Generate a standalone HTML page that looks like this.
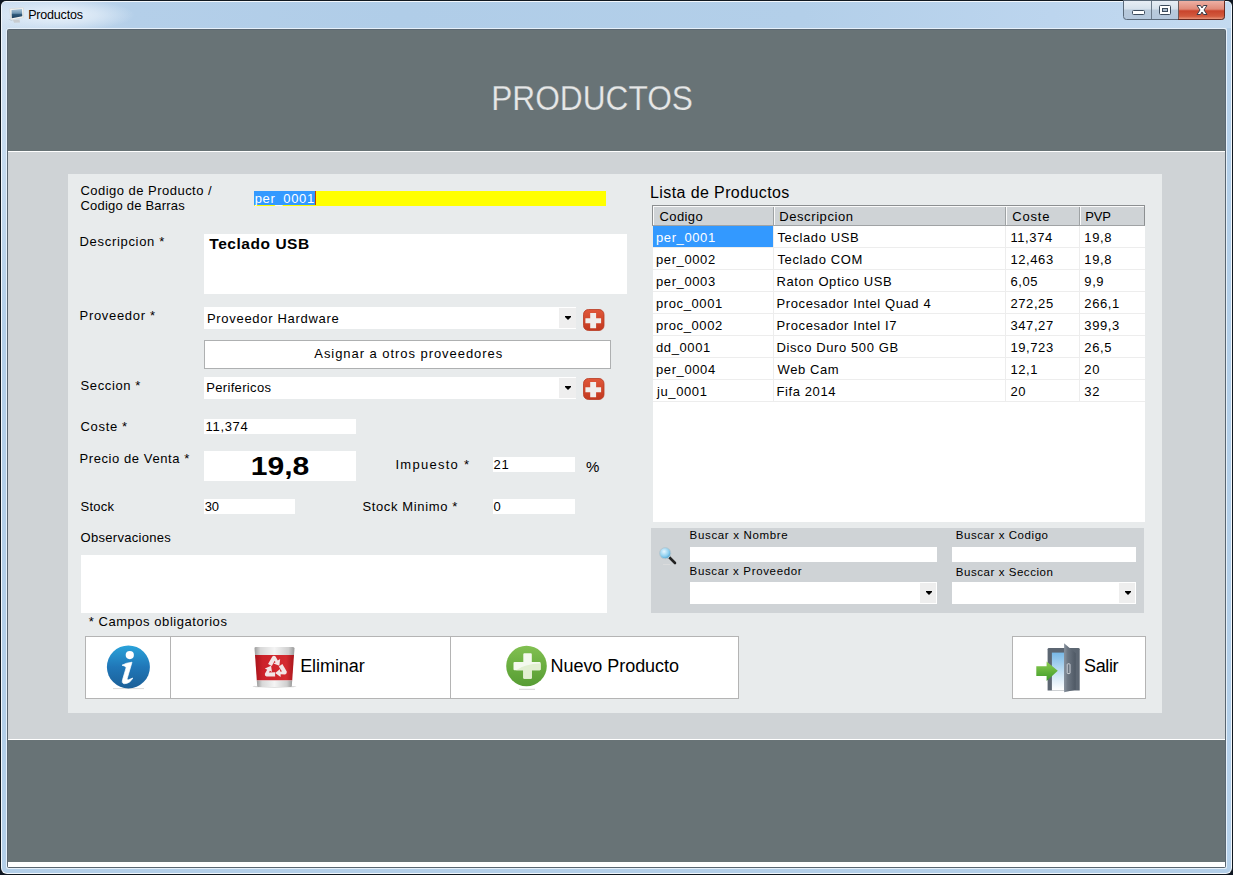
<!DOCTYPE html>
<html><head><meta charset="utf-8"><style>
html,body{margin:0;padding:0;width:1233px;height:875px;overflow:hidden;background:#0e1622;}
body{position:relative;font-family:"Liberation Sans", sans-serif;}
#win{position:absolute;left:0;top:0;width:1233px;height:875px;}
</style></head><body>
<div id="win">
<div style="position:absolute;left:0px;top:0px;width:1233px;height:875px;background:#101820;border-radius:6px 6px 7px 7px"></div>
<div style="position:absolute;left:1px;top:1px;width:1231px;height:873px;background:#f2f7fc;border-radius:5px 5px 6px 6px"></div>
<div style="position:absolute;left:2px;top:2px;width:1229px;height:871px;border-radius:4px 4px 5px 5px;background:#b3cfe9"></div>
<div style="position:absolute;left:2px;top:2px;width:1229px;height:26px;border-radius:4px 4px 0 0;background:linear-gradient(90deg,#d0e1f2 0px,#c2d8ee 60px,#b4cfe9 130px,#b0cde8 400px,#b3cfe9 800px,#bcd5ee 1050px,#c4daf0 1233px)"></div>
<div style="position:absolute;left:2px;top:2px;width:150px;height:26px;background:radial-gradient(ellipse 75px 16px at 58px 13px,rgba(236,244,251,0.95) 0%,rgba(226,237,248,0.7) 50%,rgba(200,220,240,0) 100%)"></div>
<div style="position:absolute;left:2px;top:28px;width:4px;height:300px;background:linear-gradient(180deg,#d0e1f2 0px,#c6dbef 120px,#b3cfe9 300px)"></div>
<div style="position:absolute;left:6px;top:28px;width:1221px;height:841px;background:#e6f0fa;border-radius:2px"></div>
<div style="position:absolute;left:7px;top:29px;width:1219px;height:839px;background:#5a6670;border-radius:2px"></div>
<div style="position:absolute;left:8px;top:30px;width:1217px;height:121px;background:#687376"></div>
<div style="position:absolute;left:8px;top:151px;width:1217px;height:1px;background:#ffffff"></div>
<div style="position:absolute;left:8px;top:152px;width:1217px;height:587px;background:#cfd3d6"></div>
<div style="position:absolute;left:8px;top:739px;width:1217px;height:1px;background:#ffffff"></div>
<div style="position:absolute;left:8px;top:740px;width:1217px;height:122px;background:#687376"></div>
<div style="position:absolute;left:8px;top:862px;width:1217px;height:5px;background:#ffffff"></div>
<div style="position:absolute;left:68px;top:174px;width:1094px;height:539px;background:#e8ebec"></div>
<svg style="position:absolute;left:7px;top:6px" width="18" height="18" viewBox="0 0 18 18">
<defs><linearGradient id="scr" x1="0" y1="0" x2="0" y2="1"><stop offset="0" stop-color="#a9c4d8"/><stop offset="0.45" stop-color="#6f94b0"/><stop offset="0.6" stop-color="#2f5878"/><stop offset="1" stop-color="#1d3f5c"/></linearGradient></defs>
<path d="M1.2 13 L4 14.5 L6 14.5 Z" fill="#9aa6b0" opacity="0.7"/>
<path d="M6 14 L12.5 13.6 L13 16.4 L7 16.8 Z" fill="#c8ccd0"/>
<path d="M2.7 2.8 L16.4 1.8 L16.6 11.5 L4 14 Z" fill="#f6f6f4" stroke="#cfd0cc" stroke-width="0.5"/>
<path d="M4.5 4.1 L15 3.1 L15.3 10.2 L4.8 12.2 Z" fill="url(#scr)"/>
</svg>
<svg style="position:absolute;left:1122px;top:0px" width="105" height="22" viewBox="0 0 105 22">
<defs>
<linearGradient id="gb" x1="0" y1="0" x2="0" y2="1"><stop offset="0" stop-color="#e9eff6"/><stop offset="0.45" stop-color="#d6e1ec"/><stop offset="0.5" stop-color="#b9cadb"/><stop offset="1" stop-color="#b4c7dc"/></linearGradient>
<linearGradient id="gr" x1="0" y1="0" x2="0" y2="1"><stop offset="0" stop-color="#eeb0a4"/><stop offset="0.45" stop-color="#e08a78"/><stop offset="0.55" stop-color="#c9442c"/><stop offset="0.85" stop-color="#d25a3e"/><stop offset="1" stop-color="#e8947a"/></linearGradient>
</defs>
<path d="M1.5 0.5 H102.5 V16.5 Q102.5 19.5 99.5 19.5 H4.5 Q1.5 19.5 1.5 16.5 Z" fill="url(#gb)" stroke="#5b6a7a" stroke-width="1"/>
<path d="M56.5 1 H102 V16.5 Q102 19 99.5 19 H56.5 Z" fill="url(#gr)"/>
<path d="M102.5 0.5 V16.5 Q102.5 19.5 99.5 19.5 H56" fill="none" stroke="#6a2a20" stroke-width="1"/>
<line x1="29.5" y1="1" x2="29.5" y2="19" stroke="#6b7a8a" stroke-width="1"/>
<line x1="56.5" y1="1" x2="56.5" y2="19" stroke="#6b5a5a" stroke-width="1"/>
<rect x="10.5" y="10.5" width="12" height="4" rx="1" fill="#fff" stroke="#3c4b5c" stroke-width="1"/>
<rect x="37.5" y="5.5" width="11" height="9" rx="1" fill="#fff" stroke="#3c4b5c" stroke-width="1"/>
<rect x="40.5" y="8.5" width="5" height="3" fill="#aabbcc" stroke="#3c4b5c" stroke-width="1"/>
<path d="M75 5.5 L78.5 5.5 L80 8 L81.5 5.5 L85 5.5 L82 10 L85 14.5 L81.5 14.5 L80 12 L78.5 14.5 L75 14.5 L78 10 Z" fill="#fff" stroke="#3c3c48" stroke-width="1" stroke-linejoin="round"/>
</svg>
<div style="position:absolute;left:254px;top:191px;width:352px;height:15px;background:#ffff00"></div>
<div style="position:absolute;left:254px;top:191px;width:61px;height:14px;background:#3399ff"></div>
<div style="position:absolute;left:315px;top:191px;width:1px;height:14px;background:#c04000"></div>
<div style="position:absolute;left:204px;top:234px;width:423px;height:60px;background:#fff"></div>
<div style="position:absolute;left:204px;top:307px;width:372px;height:22px;background:#fff"></div>
<div style="position:absolute;left:559px;top:308px;width:17px;height:20px;background:#eeeeee"></div>
<div style="position:absolute;left:204px;top:340px;width:407px;height:29px;background:#fff;box-sizing:border-box;border:1px solid #aeb0b1"></div>
<div style="position:absolute;left:204px;top:377px;width:372px;height:22px;background:#fff"></div>
<div style="position:absolute;left:559px;top:378px;width:17px;height:20px;background:#eeeeee"></div>
<div style="position:absolute;left:204px;top:419px;width:152px;height:15px;background:#fff"></div>
<div style="position:absolute;left:204px;top:451px;width:152px;height:30px;background:#fff"></div>
<div style="position:absolute;left:493px;top:457px;width:82px;height:15px;background:#fff"></div>
<div style="position:absolute;left:204px;top:499px;width:91px;height:15px;background:#fff"></div>
<div style="position:absolute;left:493px;top:499px;width:82px;height:15px;background:#fff"></div>
<div style="position:absolute;left:81px;top:555px;width:526px;height:58px;background:#fff"></div>
<div style="position:absolute;left:85px;top:636px;width:654px;height:63px;background:#fff;box-sizing:border-box;border:1px solid #b4b4b4"></div>
<div style="position:absolute;left:170px;top:636px;width:1px;height:63px;background:#b4b4b4"></div>
<div style="position:absolute;left:450px;top:636px;width:1px;height:63px;background:#b4b4b4"></div>
<div style="position:absolute;left:1012px;top:636px;width:134px;height:63px;background:#fff;box-sizing:border-box;border:1px solid #b4b4b4"></div>
<div style="position:absolute;left:653px;top:206px;width:492px;height:316px;background:#fff"></div>
<div style="position:absolute;left:652px;top:205px;width:493px;height:21px;background:#cfd3d6;box-sizing:border-box;border:1px solid #8c8f91;border-bottom-color:#a0a3a5"></div>
<div style="position:absolute;left:653px;top:206px;width:491px;height:1px;background:#fafafa"></div>
<div style="position:absolute;left:653px;top:206px;width:1px;height:19px;background:#fafafa"></div>
<div style="position:absolute;left:773px;top:207px;width:1px;height:18px;background:#9ea2a4"></div>
<div style="position:absolute;left:774px;top:207px;width:1px;height:18px;background:#fafafa"></div>
<div style="position:absolute;left:1005px;top:207px;width:1px;height:18px;background:#9ea2a4"></div>
<div style="position:absolute;left:1006px;top:207px;width:1px;height:18px;background:#fafafa"></div>
<div style="position:absolute;left:1079px;top:207px;width:1px;height:18px;background:#9ea2a4"></div>
<div style="position:absolute;left:1080px;top:207px;width:1px;height:18px;background:#fafafa"></div>
<div style="position:absolute;left:653px;top:247px;width:492px;height:1px;background:#ededed"></div>
<div style="position:absolute;left:773px;top:226px;width:1px;height:21px;background:#ededed"></div>
<div style="position:absolute;left:1005px;top:226px;width:1px;height:21px;background:#ededed"></div>
<div style="position:absolute;left:1079px;top:226px;width:1px;height:21px;background:#ededed"></div>
<div style="position:absolute;left:653px;top:226px;width:120px;height:21px;background:#3399ff"></div>
<div style="position:absolute;left:653px;top:269px;width:492px;height:1px;background:#ededed"></div>
<div style="position:absolute;left:773px;top:248px;width:1px;height:21px;background:#ededed"></div>
<div style="position:absolute;left:1005px;top:248px;width:1px;height:21px;background:#ededed"></div>
<div style="position:absolute;left:1079px;top:248px;width:1px;height:21px;background:#ededed"></div>
<div style="position:absolute;left:653px;top:291px;width:492px;height:1px;background:#ededed"></div>
<div style="position:absolute;left:773px;top:270px;width:1px;height:21px;background:#ededed"></div>
<div style="position:absolute;left:1005px;top:270px;width:1px;height:21px;background:#ededed"></div>
<div style="position:absolute;left:1079px;top:270px;width:1px;height:21px;background:#ededed"></div>
<div style="position:absolute;left:653px;top:313px;width:492px;height:1px;background:#ededed"></div>
<div style="position:absolute;left:773px;top:292px;width:1px;height:21px;background:#ededed"></div>
<div style="position:absolute;left:1005px;top:292px;width:1px;height:21px;background:#ededed"></div>
<div style="position:absolute;left:1079px;top:292px;width:1px;height:21px;background:#ededed"></div>
<div style="position:absolute;left:653px;top:335px;width:492px;height:1px;background:#ededed"></div>
<div style="position:absolute;left:773px;top:314px;width:1px;height:21px;background:#ededed"></div>
<div style="position:absolute;left:1005px;top:314px;width:1px;height:21px;background:#ededed"></div>
<div style="position:absolute;left:1079px;top:314px;width:1px;height:21px;background:#ededed"></div>
<div style="position:absolute;left:653px;top:357px;width:492px;height:1px;background:#ededed"></div>
<div style="position:absolute;left:773px;top:336px;width:1px;height:21px;background:#ededed"></div>
<div style="position:absolute;left:1005px;top:336px;width:1px;height:21px;background:#ededed"></div>
<div style="position:absolute;left:1079px;top:336px;width:1px;height:21px;background:#ededed"></div>
<div style="position:absolute;left:653px;top:379px;width:492px;height:1px;background:#ededed"></div>
<div style="position:absolute;left:773px;top:358px;width:1px;height:21px;background:#ededed"></div>
<div style="position:absolute;left:1005px;top:358px;width:1px;height:21px;background:#ededed"></div>
<div style="position:absolute;left:1079px;top:358px;width:1px;height:21px;background:#ededed"></div>
<div style="position:absolute;left:653px;top:401px;width:492px;height:1px;background:#ededed"></div>
<div style="position:absolute;left:773px;top:380px;width:1px;height:21px;background:#ededed"></div>
<div style="position:absolute;left:1005px;top:380px;width:1px;height:21px;background:#ededed"></div>
<div style="position:absolute;left:1079px;top:380px;width:1px;height:21px;background:#ededed"></div>
<div style="position:absolute;left:651px;top:528px;width:493px;height:85px;background:#cfd3d6"></div>
<div style="position:absolute;left:690px;top:547px;width:247px;height:15px;background:#fff"></div>
<div style="position:absolute;left:952px;top:547px;width:184px;height:15px;background:#fff"></div>
<div style="position:absolute;left:690px;top:582px;width:247px;height:22px;background:#fff"></div>
<div style="position:absolute;left:920px;top:583px;width:16px;height:20px;background:#eeeeee"></div>
<div style="position:absolute;left:952px;top:582px;width:184px;height:22px;background:#fff"></div>
<div style="position:absolute;left:1119px;top:583px;width:16px;height:20px;background:#eeeeee"></div>
<svg style="position:absolute;left:583px;top:309px" width="22" height="22" viewBox="0 0 22 22">
<defs><linearGradient id="rp583309" x1="0" y1="0" x2="0" y2="1"><stop offset="0" stop-color="#e0583a"/><stop offset="1" stop-color="#c2381f"/></linearGradient></defs>
<rect x="0.5" y="0.5" width="20.5" height="21" rx="5" fill="url(#rp583309)" stroke="#b83a22" stroke-width="0.8"/>
<path d="M7.2 4 H13.1 V9.2 H18.1 V14.2 H13.1 V19.2 H7.2 V14.2 H2.4 V9.2 H7.2 Z" fill="#f0eeec"/>
</svg>
<svg style="position:absolute;left:583px;top:378px" width="22" height="22" viewBox="0 0 22 22">
<defs><linearGradient id="rp583378" x1="0" y1="0" x2="0" y2="1"><stop offset="0" stop-color="#e0583a"/><stop offset="1" stop-color="#c2381f"/></linearGradient></defs>
<rect x="0.5" y="0.5" width="20.5" height="21" rx="5" fill="url(#rp583378)" stroke="#b83a22" stroke-width="0.8"/>
<path d="M7.2 4 H13.1 V9.2 H18.1 V14.2 H13.1 V19.2 H7.2 V14.2 H2.4 V9.2 H7.2 Z" fill="#f0eeec"/>
</svg>
<svg style="position:absolute;left:564.5px;top:316px" width="6" height="4" viewBox="0 0 6 4"><path d="M0 0 H6 V1 L3 4 L0 1 Z" fill="#000"/></svg>
<svg style="position:absolute;left:564.5px;top:386px" width="6" height="4" viewBox="0 0 6 4"><path d="M0 0 H6 V1 L3 4 L0 1 Z" fill="#000"/></svg>
<svg style="position:absolute;left:925.5px;top:591px" width="6" height="4" viewBox="0 0 6 4"><path d="M0 0 H6 V1 L3 4 L0 1 Z" fill="#000"/></svg>
<svg style="position:absolute;left:1124.5px;top:591px" width="6" height="4" viewBox="0 0 6 4"><path d="M0 0 H6 V1 L3 4 L0 1 Z" fill="#000"/></svg>
<svg style="position:absolute;left:105px;top:644px" width="48" height="48" viewBox="0 0 48 48">
<defs><linearGradient id="ib" x1="0" y1="0" x2="0" y2="1"><stop offset="0" stop-color="#2aa3da"/><stop offset="0.5" stop-color="#2077b8"/><stop offset="1" stop-color="#1b5f98"/></linearGradient></defs>
<line x1="8" y1="44.6" x2="39" y2="44.6" stroke="#cfcfcf" stroke-width="0.8"/>
<circle cx="23.4" cy="22.9" r="21.5" fill="url(#ib)"/>
<circle cx="24.8" cy="11.1" r="4.1" fill="#fff"/>
<path d="M17 21.2 Q21 18.8 27 18.2 L22.2 34.5 Q21.8 36.4 23.6 35.8 L27.8 34 Q25 39.5 19.5 39.7 Q16.4 39.8 17.6 35.6 L21.2 23.4 Q19.6 21.6 17 21.2 Z" fill="#fff" stroke="#fff" stroke-width="0.7" stroke-linejoin="round"/>
</svg>
<svg style="position:absolute;left:250px;top:645px" width="50" height="46" viewBox="0 0 50 46">
<defs>
<linearGradient id="sv" x1="0" y1="0" x2="1" y2="0"><stop offset="0" stop-color="#9c9c9c"/><stop offset="0.15" stop-color="#d8d8d8"/><stop offset="0.5" stop-color="#f4f4f4"/><stop offset="0.85" stop-color="#cfcfcf"/><stop offset="1" stop-color="#9a9a9a"/></linearGradient>
<linearGradient id="rd" x1="0" y1="0" x2="1" y2="0"><stop offset="0" stop-color="#a8141c"/><stop offset="0.2" stop-color="#cc2229"/><stop offset="0.8" stop-color="#d42a30"/><stop offset="1" stop-color="#a8161c"/></linearGradient>
</defs>
<ellipse cx="24.5" cy="41.5" rx="22" ry="1.2" fill="#d8d8d8"/>
<path d="M4.5 3 Q4.5 2 6 2 H43 Q44.5 2 44.5 3.5 L44 10 H5 Z" fill="url(#sv)"/>
<path d="M5 10 H44 L42.2 35.5 H6.8 Z" fill="url(#rd)"/>
<path d="M6.8 35.5 H42.2 L41.8 41 Q41.7 42 40.5 42 H8.5 Q7.3 42 7.2 41 Z" fill="url(#sv)"/>
<g fill="#f2e6e6" transform="translate(25.2 23.2) scale(1.3)">
<path d="M-5.5 -3.2 L-2.2 -9 Q-1 -10.2 0.3 -9 L2 -6 L3.8 -7 L3.2 -1.8 L-1.3 -3.6 L0.3 -4.5 L-0.4 -5.8 L-2.6 -1.7 Z"/>
<path d="M-5.5 -3.2 L-2.2 -9 Q-1 -10.2 0.3 -9 L2 -6 L3.8 -7 L3.2 -1.8 L-1.3 -3.6 L0.3 -4.5 L-0.4 -5.8 L-2.6 -1.7 Z" transform="rotate(120)"/>
<path d="M-5.5 -3.2 L-2.2 -9 Q-1 -10.2 0.3 -9 L2 -6 L3.8 -7 L3.2 -1.8 L-1.3 -3.6 L0.3 -4.5 L-0.4 -5.8 L-2.6 -1.7 Z" transform="rotate(240)"/>
</g>
</svg>
<svg style="position:absolute;left:504px;top:644px" width="46" height="48" viewBox="0 0 46 48">
<defs><linearGradient id="gg" x1="0" y1="0" x2="0" y2="1"><stop offset="0" stop-color="#82c052"/><stop offset="0.5" stop-color="#6aae40"/><stop offset="1" stop-color="#579c34"/></linearGradient></defs>
<line x1="15" y1="45.3" x2="31" y2="45.3" stroke="#c8c8c8" stroke-width="0.8"/>
<circle cx="22.5" cy="22" r="20.3" fill="url(#gg)"/>
<path d="M20.3 9.2 H26.8 Q27.8 9.2 27.8 10.2 V17.9 H35.6 Q36.6 17.9 36.6 18.9 V25.2 Q36.6 26.2 35.6 26.2 H27.8 V33.7 Q27.8 34.7 26.8 34.7 H20.3 Q19.3 34.7 19.3 33.7 V26.2 H10.5 Q9.5 26.2 9.5 25.2 V18.9 Q9.5 17.9 10.5 17.9 H19.3 V10.2 Q19.3 9.2 20.3 9.2 Z" fill="#f4f9ee"/>
<path d="M12 26.2 Q20 20 36.6 19.5 V25.2 Q36.6 26.2 35.6 26.2 H27.8 V33.7 Q27.8 34.7 26.8 34.7 H20.3 Q19.3 34.7 19.3 33.7 V26.2 Z" fill="#e2efd2"/>
</svg>
<svg style="position:absolute;left:1034px;top:641px" width="48" height="54" viewBox="0 0 48 54">
<defs>
<linearGradient id="dwin" x1="0" y1="0" x2="0" y2="1"><stop offset="0" stop-color="#78b8e6"/><stop offset="0.6" stop-color="#cfe5f5"/><stop offset="1" stop-color="#ffffff"/></linearGradient>
<linearGradient id="dr" x1="0" y1="0" x2="1" y2="0"><stop offset="0" stop-color="#8a94a0"/><stop offset="0.3" stop-color="#6c7682"/><stop offset="1" stop-color="#4e5864"/></linearGradient>
<linearGradient id="ar" x1="0" y1="0" x2="0" y2="1"><stop offset="0" stop-color="#8ccc50"/><stop offset="1" stop-color="#3c9a28"/></linearGradient>
</defs>
<path d="M13.6 8.2 Q13.6 6.9 15 6.9 H44.4 Q45.7 6.9 45.7 8.2 V49.4 H13.6 Z" fill="#5c6672"/>
<rect x="17.9" y="11.6" width="12.2" height="37.8" fill="url(#dwin)"/>
<path d="M30.1 2.3 L41.7 12.2 V48.7 L30.1 51.3 Z" fill="url(#dr)"/>
<rect x="33.2" y="22.8" width="2.8" height="9.8" rx="0.8" fill="none" stroke="#d8dde2" stroke-width="0.9"/>
<path d="M2.3 25.2 H12.6 V20.5 L23.8 29.8 L12.6 40.1 V35.1 H2.3 Z" fill="url(#ar)"/>
</svg>
<svg style="position:absolute;left:658px;top:546px" width="20" height="20" viewBox="0 0 20 20">
<defs><radialGradient id="mg" cx="0.4" cy="0.35" r="0.7"><stop offset="0" stop-color="#e6f6ff"/><stop offset="0.6" stop-color="#8fd0f0"/><stop offset="1" stop-color="#4aa0d0"/></radialGradient></defs>
<line x1="10.5" y1="10.5" x2="17" y2="17" stroke="#222" stroke-width="2.6" stroke-linecap="round"/>
<circle cx="7.2" cy="7.2" r="5.6" fill="url(#mg)" stroke="#b8c8d0" stroke-width="1"/>
<line x1="5" y1="18.5" x2="12" y2="18.5" stroke="#ddd" stroke-width="0.8"/>
</svg>
<span id="t0" style="position:absolute;left:28.20px;top:9.02px;font-size:12.5px;line-height:12.5px;font-weight:400;color:#000;letter-spacing:-0.191px;white-space:nowrap;">Productos</span>
<span id="t1" style="position:absolute;left:490.50px;top:81.00px;font-size:34.5px;line-height:34.5px;font-weight:400;color:#e6e7e7;letter-spacing:0.000px;white-space:nowrap;-webkit-text-stroke:0.25px #687376;transform:scaleX(0.9179);transform-origin:2.00px 0;">PRODUCTOS</span>
<span id="t2" style="position:absolute;left:80.50px;top:183.50px;font-size:13px;line-height:13px;font-weight:400;color:#000;letter-spacing:0.472px;white-space:nowrap;">Codigo de Producto /</span>
<span id="t3" style="position:absolute;left:80.50px;top:198.60px;font-size:13px;line-height:13px;font-weight:400;color:#000;letter-spacing:0.209px;white-space:nowrap;">Codigo de Barras</span>
<span id="t4" style="position:absolute;left:254.70px;top:191.80px;font-size:13px;line-height:13px;font-weight:400;color:#fff;letter-spacing:0.656px;white-space:nowrap;">per_0001</span>
<span id="t5" style="position:absolute;left:79.50px;top:234.50px;font-size:13px;line-height:13px;font-weight:400;color:#000;letter-spacing:0.690px;white-space:nowrap;">Descripcion *</span>
<span id="t6" style="position:absolute;left:209.30px;top:236.18px;font-size:15.5px;line-height:15.5px;font-weight:700;color:#000;letter-spacing:0.544px;white-space:nowrap;">Teclado USB</span>
<span id="t7" style="position:absolute;left:79.60px;top:309.00px;font-size:13px;line-height:13px;font-weight:400;color:#000;letter-spacing:0.681px;white-space:nowrap;">Proveedor *</span>
<span id="t8" style="position:absolute;left:207.00px;top:312.20px;font-size:13px;line-height:13px;font-weight:400;color:#000;letter-spacing:0.687px;white-space:nowrap;">Proveedor Hardware</span>
<span id="t9" style="position:absolute;left:314.30px;top:346.90px;font-size:13px;line-height:13px;font-weight:400;color:#000;letter-spacing:0.946px;white-space:nowrap;">Asignar a otros proveedores</span>
<span id="t10" style="position:absolute;left:80.60px;top:379.40px;font-size:13px;line-height:13px;font-weight:400;color:#000;letter-spacing:0.605px;white-space:nowrap;">Seccion *</span>
<span id="t11" style="position:absolute;left:206.20px;top:381.00px;font-size:13px;line-height:13px;font-weight:400;color:#000;letter-spacing:0.339px;white-space:nowrap;">Perifericos</span>
<span id="t12" style="position:absolute;left:80.60px;top:419.90px;font-size:13px;line-height:13px;font-weight:400;color:#000;letter-spacing:0.638px;white-space:nowrap;">Coste *</span>
<span id="t13" style="position:absolute;left:205.60px;top:420.00px;font-size:13px;line-height:13px;font-weight:400;color:#000;letter-spacing:0.667px;white-space:nowrap;">11,374</span>
<span id="t14" style="position:absolute;left:79.50px;top:451.50px;font-size:13px;line-height:13px;font-weight:400;color:#000;letter-spacing:0.581px;white-space:nowrap;">Precio de Venta *</span>
<span id="t15" style="position:absolute;left:251.30px;top:454.01px;font-size:25.5px;line-height:25.5px;font-weight:700;color:#000;letter-spacing:0.000px;white-space:nowrap;transform:scaleX(1.1786);transform-origin:1.00px 0;">19,8</span>
<span id="t16" style="position:absolute;left:395.50px;top:458.00px;font-size:13px;line-height:13px;font-weight:400;color:#000;letter-spacing:1.257px;white-space:nowrap;">Impuesto *</span>
<span id="t17" style="position:absolute;left:493.50px;top:458.00px;font-size:13px;line-height:13px;font-weight:400;color:#000;letter-spacing:0.770px;white-space:nowrap;">21</span>
<span id="t18" style="position:absolute;left:585.90px;top:458.80px;font-size:15px;line-height:15px;font-weight:400;color:#000;letter-spacing:0.000px;white-space:nowrap;">%</span>
<span id="t19" style="position:absolute;left:80.50px;top:499.90px;font-size:13px;line-height:13px;font-weight:400;color:#000;letter-spacing:0.272px;white-space:nowrap;">Stock</span>
<span id="t20" style="position:absolute;left:204.80px;top:500.00px;font-size:13px;line-height:13px;font-weight:400;color:#000;letter-spacing:-0.230px;white-space:nowrap;">30</span>
<span id="t21" style="position:absolute;left:362.40px;top:499.70px;font-size:13px;line-height:13px;font-weight:400;color:#000;letter-spacing:0.636px;white-space:nowrap;">Stock Minimo *</span>
<span id="t22" style="position:absolute;left:493.50px;top:500.00px;font-size:13px;line-height:13px;font-weight:400;color:#000;letter-spacing:0.000px;white-space:nowrap;">0</span>
<span id="t23" style="position:absolute;left:80.50px;top:531.30px;font-size:13px;line-height:13px;font-weight:400;color:#000;letter-spacing:0.299px;white-space:nowrap;">Observaciones</span>
<span id="t24" style="position:absolute;left:88.70px;top:614.70px;font-size:13px;line-height:13px;font-weight:400;color:#000;letter-spacing:0.551px;white-space:nowrap;">* Campos obligatorios</span>
<span id="t25" style="position:absolute;left:300.20px;top:656.96px;font-size:18px;line-height:18px;font-weight:400;color:#000;letter-spacing:-0.074px;white-space:nowrap;">Eliminar</span>
<span id="t26" style="position:absolute;left:550.50px;top:656.96px;font-size:18px;line-height:18px;font-weight:400;color:#000;letter-spacing:-0.043px;white-space:nowrap;">Nuevo Producto</span>
<span id="t27" style="position:absolute;left:1084.00px;top:656.96px;font-size:18px;line-height:18px;font-weight:400;color:#000;letter-spacing:-0.379px;white-space:nowrap;">Salir</span>
<span id="t28" style="position:absolute;left:650.00px;top:184.96px;font-size:16px;line-height:16px;font-weight:400;color:#000;letter-spacing:0.399px;white-space:nowrap;">Lista de Productos</span>
<span id="t29" style="position:absolute;left:659.60px;top:209.90px;font-size:13px;line-height:13px;font-weight:400;color:#000;letter-spacing:0.367px;white-space:nowrap;">Codigo</span>
<span id="t30" style="position:absolute;left:779.20px;top:209.90px;font-size:13px;line-height:13px;font-weight:400;color:#000;letter-spacing:0.600px;white-space:nowrap;">Descripcion</span>
<span id="t31" style="position:absolute;left:1012.30px;top:209.80px;font-size:13px;line-height:13px;font-weight:400;color:#000;letter-spacing:0.818px;white-space:nowrap;">Coste</span>
<span id="t32" style="position:absolute;left:1085.30px;top:209.80px;font-size:13px;line-height:13px;font-weight:400;color:#000;letter-spacing:-0.171px;white-space:nowrap;">PVP</span>
<span id="t33" style="position:absolute;left:656.00px;top:230.90px;font-size:13px;line-height:13px;font-weight:400;color:#fff;letter-spacing:0.600px;white-space:nowrap;">per_0001</span>
<span id="t34" style="position:absolute;left:777.50px;top:230.90px;font-size:13px;line-height:13px;font-weight:400;color:#000;letter-spacing:0.600px;white-space:nowrap;">Teclado USB</span>
<span id="t35" style="position:absolute;left:1010.40px;top:230.90px;font-size:13px;line-height:13px;font-weight:400;color:#000;letter-spacing:0.600px;white-space:nowrap;">11,374</span>
<span id="t36" style="position:absolute;left:1084.30px;top:230.90px;font-size:13px;line-height:13px;font-weight:400;color:#000;letter-spacing:0.600px;white-space:nowrap;">19,8</span>
<span id="t37" style="position:absolute;left:656.00px;top:252.90px;font-size:13px;line-height:13px;font-weight:400;color:#000;letter-spacing:0.600px;white-space:nowrap;">per_0002</span>
<span id="t38" style="position:absolute;left:777.50px;top:252.90px;font-size:13px;line-height:13px;font-weight:400;color:#000;letter-spacing:0.600px;white-space:nowrap;">Teclado COM</span>
<span id="t39" style="position:absolute;left:1010.40px;top:252.90px;font-size:13px;line-height:13px;font-weight:400;color:#000;letter-spacing:0.600px;white-space:nowrap;">12,463</span>
<span id="t40" style="position:absolute;left:1084.30px;top:252.90px;font-size:13px;line-height:13px;font-weight:400;color:#000;letter-spacing:0.600px;white-space:nowrap;">19,8</span>
<span id="t41" style="position:absolute;left:656.00px;top:274.90px;font-size:13px;line-height:13px;font-weight:400;color:#000;letter-spacing:0.600px;white-space:nowrap;">per_0003</span>
<span id="t42" style="position:absolute;left:776.50px;top:274.90px;font-size:13px;line-height:13px;font-weight:400;color:#000;letter-spacing:0.600px;white-space:nowrap;">Raton Optico USB</span>
<span id="t43" style="position:absolute;left:1010.40px;top:274.90px;font-size:13px;line-height:13px;font-weight:400;color:#000;letter-spacing:0.600px;white-space:nowrap;">6,05</span>
<span id="t44" style="position:absolute;left:1084.30px;top:274.90px;font-size:13px;line-height:13px;font-weight:400;color:#000;letter-spacing:0.600px;white-space:nowrap;">9,9</span>
<span id="t45" style="position:absolute;left:656.00px;top:296.90px;font-size:13px;line-height:13px;font-weight:400;color:#000;letter-spacing:0.600px;white-space:nowrap;">proc_0001</span>
<span id="t46" style="position:absolute;left:776.50px;top:296.90px;font-size:13px;line-height:13px;font-weight:400;color:#000;letter-spacing:0.600px;white-space:nowrap;">Procesador Intel Quad 4</span>
<span id="t47" style="position:absolute;left:1010.40px;top:296.90px;font-size:13px;line-height:13px;font-weight:400;color:#000;letter-spacing:0.600px;white-space:nowrap;">272,25</span>
<span id="t48" style="position:absolute;left:1084.30px;top:296.90px;font-size:13px;line-height:13px;font-weight:400;color:#000;letter-spacing:0.600px;white-space:nowrap;">266,1</span>
<span id="t49" style="position:absolute;left:656.00px;top:318.90px;font-size:13px;line-height:13px;font-weight:400;color:#000;letter-spacing:0.600px;white-space:nowrap;">proc_0002</span>
<span id="t50" style="position:absolute;left:776.50px;top:318.90px;font-size:13px;line-height:13px;font-weight:400;color:#000;letter-spacing:0.600px;white-space:nowrap;">Procesador Intel I7</span>
<span id="t51" style="position:absolute;left:1010.40px;top:318.90px;font-size:13px;line-height:13px;font-weight:400;color:#000;letter-spacing:0.600px;white-space:nowrap;">347,27</span>
<span id="t52" style="position:absolute;left:1084.30px;top:318.90px;font-size:13px;line-height:13px;font-weight:400;color:#000;letter-spacing:0.600px;white-space:nowrap;">399,3</span>
<span id="t53" style="position:absolute;left:656.00px;top:340.90px;font-size:13px;line-height:13px;font-weight:400;color:#000;letter-spacing:0.600px;white-space:nowrap;">dd_0001</span>
<span id="t54" style="position:absolute;left:776.50px;top:340.90px;font-size:13px;line-height:13px;font-weight:400;color:#000;letter-spacing:0.600px;white-space:nowrap;">Disco Duro 500 GB</span>
<span id="t55" style="position:absolute;left:1010.40px;top:340.90px;font-size:13px;line-height:13px;font-weight:400;color:#000;letter-spacing:0.600px;white-space:nowrap;">19,723</span>
<span id="t56" style="position:absolute;left:1084.30px;top:340.90px;font-size:13px;line-height:13px;font-weight:400;color:#000;letter-spacing:0.600px;white-space:nowrap;">26,5</span>
<span id="t57" style="position:absolute;left:656.00px;top:362.90px;font-size:13px;line-height:13px;font-weight:400;color:#000;letter-spacing:0.600px;white-space:nowrap;">per_0004</span>
<span id="t58" style="position:absolute;left:777.50px;top:362.90px;font-size:13px;line-height:13px;font-weight:400;color:#000;letter-spacing:0.600px;white-space:nowrap;">Web Cam</span>
<span id="t59" style="position:absolute;left:1010.40px;top:362.90px;font-size:13px;line-height:13px;font-weight:400;color:#000;letter-spacing:0.600px;white-space:nowrap;">12,1</span>
<span id="t60" style="position:absolute;left:1084.30px;top:362.90px;font-size:13px;line-height:13px;font-weight:400;color:#000;letter-spacing:0.600px;white-space:nowrap;">20</span>
<span id="t61" style="position:absolute;left:657.00px;top:384.90px;font-size:13px;line-height:13px;font-weight:400;color:#000;letter-spacing:0.600px;white-space:nowrap;">ju_0001</span>
<span id="t62" style="position:absolute;left:776.50px;top:384.90px;font-size:13px;line-height:13px;font-weight:400;color:#000;letter-spacing:0.600px;white-space:nowrap;">Fifa 2014</span>
<span id="t63" style="position:absolute;left:1010.40px;top:384.90px;font-size:13px;line-height:13px;font-weight:400;color:#000;letter-spacing:0.600px;white-space:nowrap;">20</span>
<span id="t64" style="position:absolute;left:1084.30px;top:384.90px;font-size:13px;line-height:13px;font-weight:400;color:#000;letter-spacing:0.600px;white-space:nowrap;">32</span>
<span id="t65" style="position:absolute;left:689.60px;top:529.77px;font-size:11.5px;line-height:11.5px;font-weight:400;color:#000;letter-spacing:0.662px;white-space:nowrap;">Buscar x Nombre</span>
<span id="t66" style="position:absolute;left:955.80px;top:529.67px;font-size:11.5px;line-height:11.5px;font-weight:400;color:#000;letter-spacing:0.559px;white-space:nowrap;">Buscar x Codigo</span>
<span id="t67" style="position:absolute;left:689.60px;top:566.47px;font-size:11.5px;line-height:11.5px;font-weight:400;color:#000;letter-spacing:0.649px;white-space:nowrap;">Buscar x Proveedor</span>
<span id="t68" style="position:absolute;left:955.80px;top:566.57px;font-size:11.5px;line-height:11.5px;font-weight:400;color:#000;letter-spacing:0.550px;white-space:nowrap;">Buscar x Seccion</span>
</div>
</body></html>
